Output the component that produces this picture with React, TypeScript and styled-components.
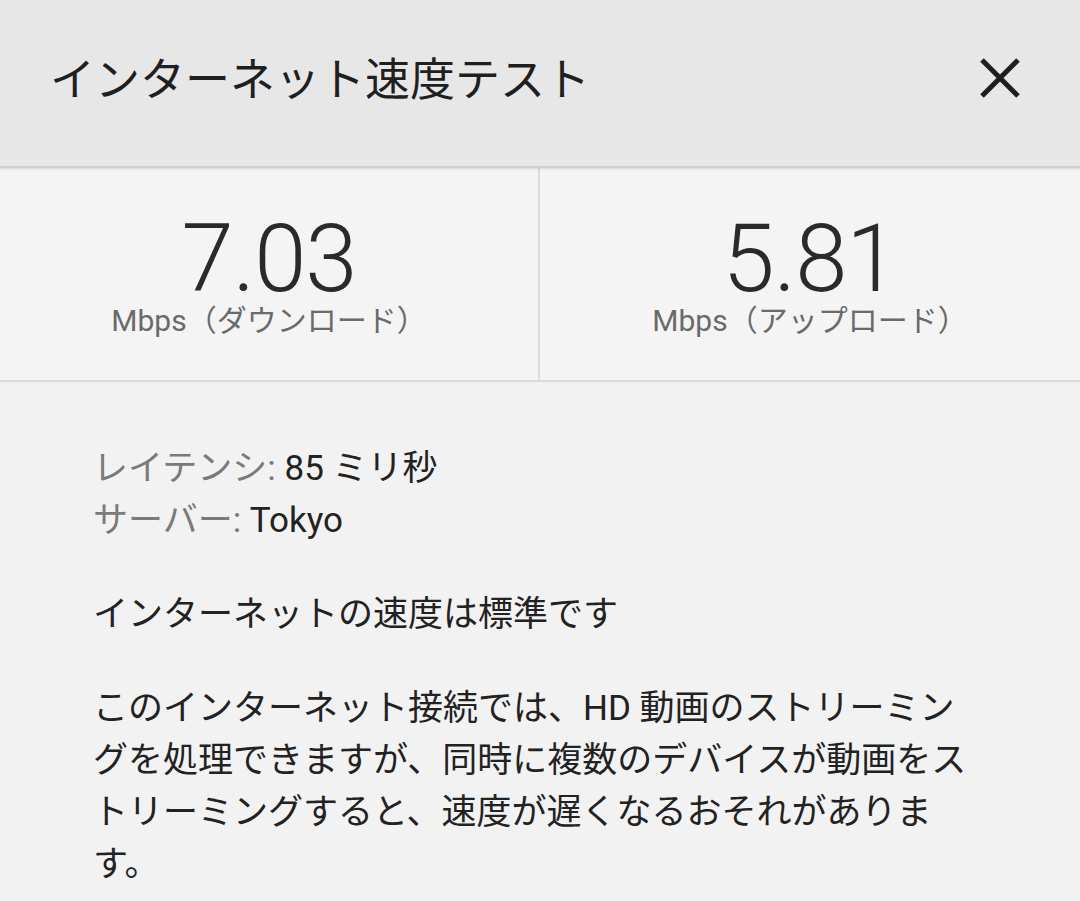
import React from 'react';
import styled, { createGlobalStyle } from 'styled-components';

const GlobalStyle = createGlobalStyle`
  html, body {
    margin: 0;
    padding: 0;
    background: #f2f2f2;
  }
  body {
    font-family: Roboto, "Noto Sans CJK JP", sans-serif;
  }
`;

const Page = styled.div`
  width: 1080px;
  height: 901px;
  overflow: hidden;
  background: #f2f2f2;
`;

const Header = styled.header`
  height: 168px;
  background: #e7e7e7;
  display: flex;
  align-items: center;
  justify-content: space-between;
  padding: 0 56px 0 50px;
  box-sizing: border-box;
  border-bottom: 2px solid #cfcfcf;
  box-shadow: 0 1px 2px rgba(0, 0, 0, 0.12);
  position: relative;
  z-index: 1;
`;

const Title = styled.h1`
  margin: 0 0 14px;
  font-family: "Noto Sans CJK JP", sans-serif;
  font-weight: 400;
  font-size: 45px;
  color: #1f1f1f;
`;

const CloseButton = styled.button`
  border: none;
  background: transparent;
  padding: 0;
  margin-bottom: 10px;
  width: 48px;
  height: 48px;
  display: flex;
  align-items: center;
  justify-content: center;
`;

const Stats = styled.section`
  display: grid;
  grid-template-columns: 1fr 1fr;
  height: 212px;
  background: #f4f4f4;
  border-bottom: 2px solid #dadada;
`;

const StatCell = styled.div<{ $divider?: boolean }>`
  display: flex;
  flex-direction: column;
  align-items: center;
  justify-content: center;
  padding-top: 10px;
  border-right: ${(p) => (p.$divider ? '2px solid #dcdcdc' : 'none')};
`;

const StatValue = styled.div`
  font-family: Roboto, sans-serif;
  font-weight: 300;
  font-size: 94px;
  line-height: 80px;
  color: #2a2a2a;
  letter-spacing: -1px;
`;

const StatUnit = styled.div`
  font-family: Roboto, "Noto Sans CJK JP", sans-serif;
  font-size: 30px;
  line-height: 36px;
  color: #6a6a6a;
  margin-top: 4px;
`;

const Body = styled.section`
  padding: 61px 60px 0 93px;
  background: #f2f2f2;
`;

const InfoList = styled.div`
  display: flex;
  flex-direction: column;
`;

const InfoRow = styled.div`
  font-family: Roboto, "Noto Sans CJK JP", sans-serif;
  font-size: 35px;
  line-height: 52px;
  color: #222;
`;

const InfoLabel = styled.span`
  color: #7a7a7a;
`;

const Summary = styled.p`
  margin: 38px 0 0;
  font-family: "Noto Sans CJK JP", sans-serif;
  font-size: 35px;
  line-height: 52px;
  color: #222;
`;

const Description = styled.p`
  margin: 46px 0 0;
  width: 894px;
  font-family: Roboto, "Noto Sans CJK JP", sans-serif;
  font-size: 35px;
  line-height: 52px;
  color: #222;
`;

const CloseIcon = () => (
  <svg width="44" height="44" viewBox="0 0 44 44">
    <path d="M4 4 L40 40 M40 4 L4 40" stroke="#1f1f1f" strokeWidth="5" strokeLinecap="butt" />
  </svg>
);

export default function App() {
  return (
    <>
      <GlobalStyle />
      <Page>
        <Header>
          <Title>インターネット速度テスト</Title>
          <CloseButton aria-label="閉じる">
            <CloseIcon />
          </CloseButton>
        </Header>
        <Stats>
          <StatCell $divider>
            <StatValue>7.03</StatValue>
            <StatUnit>Mbps（ダウンロード）</StatUnit>
          </StatCell>
          <StatCell>
            <StatValue>5.81</StatValue>
            <StatUnit>Mbps（アップロード）</StatUnit>
          </StatCell>
        </Stats>
        <Body>
          <InfoList>
            <InfoRow>
              <InfoLabel>レイテンシ:</InfoLabel> 85 ミリ秒
            </InfoRow>
            <InfoRow>
              <InfoLabel>サーバー:</InfoLabel> Tokyo
            </InfoRow>
          </InfoList>
          <Summary>インターネットの速度は標準です</Summary>
          <Description>
            このインターネット接続では、HD 動画のストリーミングを処理できますが、同時に複数のデバイスが動画をストリーミングすると、速度が遅くなるおそれがあります。
          </Description>
        </Body>
      </Page>
    </>
  );
}
